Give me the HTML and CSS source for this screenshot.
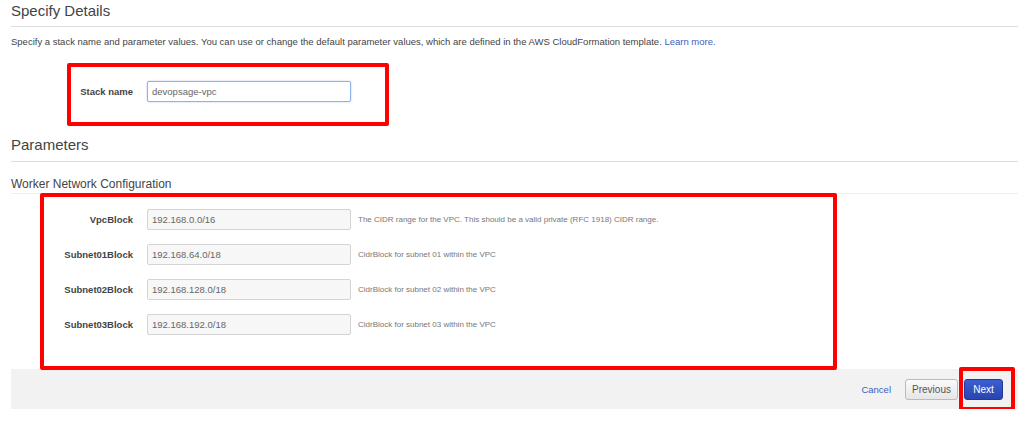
FILE: index.html
```html
<!DOCTYPE html>
<html lang="en">
  <head>
    <meta charset="UTF-8" />
    <title>Specify Details</title>
    <link rel="stylesheet" href="styles.css">
  </head>
  <body>
    <div class="page">
      <h2 class="title">Specify Details</h2>
      <p class="intro">Specify a stack name and parameter values. You can use or change the default parameter values, which are defined in the AWS CloudFormation template. <a href="#" class="learn">Learn more.</a></p>

      <div class="row stack-row">
        <label class="lbl">Stack name</label>
        <input class="field focus" type="text" value="devopsage-vpc" />
      </div>

      <h2 class="title params">Parameters</h2>
      <h3 class="group">Worker Network Configuration</h3>

      <div class="rows">
        <div class="row">
          <label class="lbl">VpcBlock</label>
          <input class="field" type="text" value="192.168.0.0/16" />
          <span class="hint">The CIDR range for the VPC. This should be a valid private (RFC 1918) CIDR range.</span>
        </div>
        <div class="row">
          <label class="lbl">Subnet01Block</label>
          <input class="field" type="text" value="192.168.64.0/18" />
          <span class="hint">CidrBlock for subnet 01 within the VPC</span>
        </div>
        <div class="row">
          <label class="lbl">Subnet02Block</label>
          <input class="field" type="text" value="192.168.128.0/18" />
          <span class="hint">CidrBlock for subnet 02 within the VPC</span>
        </div>
        <div class="row">
          <label class="lbl">Subnet03Block</label>
          <input class="field" type="text" value="192.168.192.0/18" />
          <span class="hint">CidrBlock for subnet 03 within the VPC</span>
        </div>
      </div>

      <div class="footer">
        <a href="#" class="cancel">Cancel</a>
        <button class="btn prev">Previous</button>
        <button class="btn next">Next</button>
      </div>
    </div>

    <!-- red annotation boxes drawn over the screenshot -->
    <div class="mark mark-stack"></div>
    <div class="mark mark-params"></div>
    <div class="mark mark-next"></div>
  </body>
</html>
```

FILE: styles.css
```css
* {
  margin: 0;
  padding: 0;
  box-sizing: border-box;
  font-family: "Liberation Sans", Arial, sans-serif;
}
body {
  background: #fff;
  color: #444;
  position: relative;
}

.page {
  padding: 0 6px 0 11px;
}

.title {
  font-size: 15px;
  font-weight: normal;
  color: #444;
  padding-top: 2px;
  height: 27px;
  border-bottom: 1px solid #ddd;
}

.intro {
  font-size: 9.5px;
  color: #444;
  margin-top: 9px;
  line-height: 12px;
}
.learn {
  color: #3b5fc0;
  text-decoration: none;
}

.row {
  display: flex;
  align-items: center;
  height: 35px;
}
.stack-row {
  margin-top: 26px;
}

.lbl {
  width: 122px;
  text-align: right;
  font-size: 9.5px;
  font-weight: bold;
  color: #444;
  margin-right: 14px;
}

.field {
  width: 204px;
  height: 21px;
  border: 1px solid #d4d4d4;
  border-radius: 2px;
  background: #f7f7f7;
  padding: 0 4px;
  font-size: 9.5px;
  color: #666;
}
.field.focus {
  background: #fff;
  border-color: #8db4ea;
  box-shadow: 0 0 2px rgba(100, 150, 230, 0.5);
}

.hint {
  font-size: 8px;
  color: #777;
  margin-left: 7px;
}

.params {
  margin-top: 22px;
  height: 31px;
  padding-top: 5px;
}

.group {
  font-size: 12px;
  font-weight: normal;
  color: #444;
  margin-top: 14px;
  padding-top: 1px;
  height: 18px;
  border-bottom: 1px solid #eee;
}

.rows {
  margin-top: 8px;
}

.footer {
  margin-top: 27px;
  height: 40px;
  background: #f2f2f2;
  display: flex;
  align-items: center;
  justify-content: flex-end;
  padding-right: 15px;
}
.cancel {
  font-size: 9.5px;
  color: #3b5fc0;
  text-decoration: none;
  margin-right: 14px;
}
.btn {
  height: 21px;
  font-size: 10px;
  border-radius: 3px;
  cursor: pointer;
}
.prev {
  width: 53px;
  background: linear-gradient(#fafafa, #e6e6e6);
  border: 1px solid #bbb;
  color: #555;
  margin-right: 6px;
}
.next {
  width: 39px;
  background: linear-gradient(#3b5fcf, #2a44b0);
  border: 1px solid #23399a;
  color: #fff;
}

.mark {
  position: absolute;
  border: 4px solid #f00;
  border-radius: 2px;
}
.mark-stack {
  left: 67px;
  top: 63px;
  width: 322px;
  height: 63px;
}
.mark-params {
  left: 40px;
  top: 193px;
  width: 797px;
  height: 177px;
}
.mark-next {
  left: 959px;
  top: 367px;
  width: 56px;
  height: 44px;
}
```
